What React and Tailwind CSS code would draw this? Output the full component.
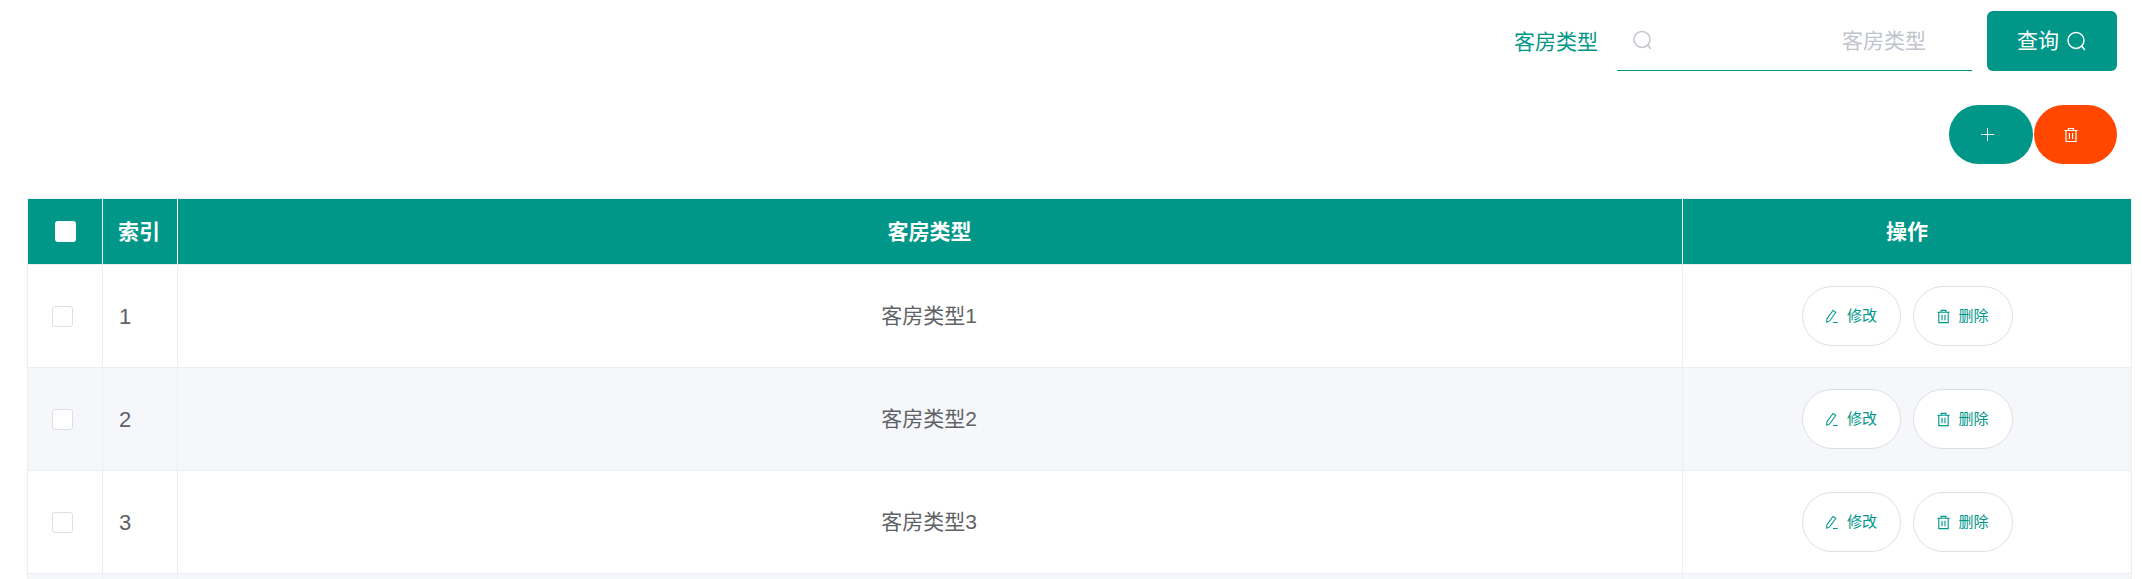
import React from 'react';

const rows = [
  { id: 1, name: '客房类型1' },
  { id: 2, name: '客房类型2' },
  { id: 3, name: '客房类型3' },
];

const SearchIcon = ({ className }) => (
  <svg className={className} viewBox="0 0 20 20" fill="none" stroke="currentColor" strokeWidth="1.4">
    <circle cx="9.5" cy="9" r="7.6" />
    <path d="M15 14.6l2.6 3" strokeLinecap="round" />
  </svg>
);

const TrashIcon = ({ className }) => (
  <svg className={className} viewBox="0 0 16 16" fill="none" stroke="currentColor" strokeWidth="1.2">
    <path d="M1.5 3.5h13M5.5 3.5V1.5h5v2M3 3.5v11h10v-11M6.4 6v6M9.6 6v6" />
  </svg>
);

const EditIcon = ({ className }) => (
  <svg className={className} viewBox="0 0 16 16" fill="none" stroke="currentColor" strokeWidth="1.1">
    <path d="M2 10.5L8.5 1.5l3 2.2-6.5 9-3.2 1.3zM8.5 14.5h5" />
  </svg>
);

const ActionButton = ({ icon, label, width }) => (
  <button className={`flex h-[60px] items-center justify-center gap-[7px] rounded-[30px] border border-[#dcdfe6] bg-white text-[15px] text-[#009688] ${width}`}>
    {icon}
    {label}
  </button>
);

const App = () => {
  return (
    <div className="h-[579px] w-[2142px] overflow-hidden bg-white font-['Liberation_Sans','Noto_Sans_CJK_SC',sans-serif]">
      {/* Search */}
      <div className="flex h-[71px] items-start justify-end pr-[25px] pt-[11px]">
        <span className="mr-[19px] mt-[17px] text-[21px] leading-[28px] text-[#009688]">客房类型</span>
        <div className="flex h-[60px] w-[355px] items-center justify-between border-b border-[#009688] pl-[15px] pr-[46px]">
          <SearchIcon className="h-[21px] w-[21px] text-[#c0c4cc]" />
          <span className="text-[21px] text-[#c0c4cc]">客房类型</span>
        </div>
        <button className="ml-[15px] flex h-[60px] w-[130px] items-center justify-center gap-[7px] rounded-[6px] bg-[#009688] text-[21px] text-white">
          查询
          <SearchIcon className="h-[21px] w-[21px]" />
        </button>
      </div>

      {/* Add / delete */}
      <div className="flex justify-end gap-[1px] pr-[25px] pt-[34px]">
        <button className="flex h-[59px] w-[84px] items-center justify-center rounded-[30px] bg-[#009688] pr-[8px] text-white">
          <svg className="h-[13px] w-[13px]" viewBox="0 0 14 14" fill="none" stroke="currentColor" strokeWidth="1.1">
            <path d="M7 0v14M0 7h14" />
          </svg>
        </button>
        <button className="flex h-[59px] w-[83px] items-center justify-center rounded-[30px] bg-[#ff4700] pr-[10px] text-white">
          <TrashIcon className="h-[16px] w-[16px]" />
        </button>
      </div>

      {/* Table */}
      <div className="ml-[27px] mr-[10px] mt-[34px]">
        <table className="w-full table-fixed border-collapse text-[21px] text-[#606266]">
          <colgroup>
            <col className="w-[75px]" />
            <col className="w-[75px]" />
            <col />
            <col className="w-[449px]" />
          </colgroup>
          <thead>
            <tr className="h-[66px] bg-[#009688] font-bold text-white">
              <th className="border border-[#ebeef5]">
                <span className="mx-auto block h-[21px] w-[21px] rounded-[3px] bg-white" />
              </th>
              <th className="border border-[#ebeef5] border-l-white border-r-white pr-[2px] font-bold">索引</th>
              <th className="border border-[#ebeef5] border-r-white pr-[1px] font-bold">客房类型</th>
              <th className="border border-[#ebeef5] font-bold">操作</th>
            </tr>
          </thead>
          <tbody>
            {rows.map((row) => (
              <tr key={row.id} className="h-[103px] even:bg-[#f6f7fb]">
                <td className="border border-[#ebeef5]">
                  <span className="ml-[24px] block h-[21px] w-[21px] rounded-[3px] border border-[#dcdfe6] bg-white" />
                </td>
                <td className="border border-[#ebeef5] pl-[16px] text-[22px]">{row.id}</td>
                <td className="border border-[#ebeef5] pr-[2px] text-center">{row.name}</td>
                <td className="border border-[#ebeef5]">
                  <div className="flex justify-center gap-[12px]">
                    <ActionButton width="w-[99px]" label="修改" icon={<EditIcon className="h-[15px] w-[15px]" />} />
                    <ActionButton width="w-[100px]" label="删除" icon={<TrashIcon className="h-[15px] w-[15px]" />} />
                  </div>
                </td>
              </tr>
            ))}
            <tr className="h-[40px] bg-[#f6f7fb]">
              <td className="border border-[#ebeef5]" />
              <td className="border border-[#ebeef5]" />
              <td className="border border-[#ebeef5]" />
              <td className="border border-[#ebeef5]" />
            </tr>
          </tbody>
        </table>
      </div>
    </div>
  );
};

export default App;
